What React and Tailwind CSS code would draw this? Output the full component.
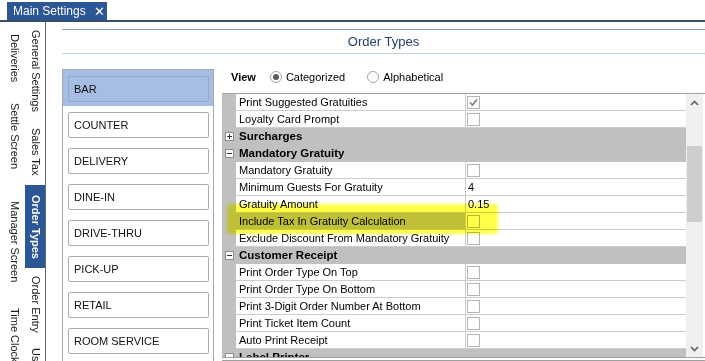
import React from "react";

const orderTypes = [
  "BAR",
  "COUNTER",
  "DELIVERY",
  "DINE-IN",
  "DRIVE-THRU",
  "PICK-UP",
  "RETAIL",
  "ROOM SERVICE",
];

// property grid rows
const rows = [
  { label: "Print Suggested Gratuities", check: true },
  { label: "Loyalty Card Prompt", check: false },
  { cat: "Surcharges", open: false },
  { cat: "Mandatory Gratuity", open: true },
  { label: "Mandatory Gratuity", check: false },
  { label: "Minimum Guests For Gratuity", value: "4" },
  { label: "Gratuity Amount", value: "0.15" },
  { label: "Include Tax In Gratuity Calculation", check: false, selected: true },
  { label: "Exclude Discount From Mandatory Gratuity", check: false },
  { cat: "Customer Receipt", open: true },
  { label: "Print Order Type On Top", check: false },
  { label: "Print Order Type On Bottom", check: false },
  { label: "Print 3-Digit Order Number At Bottom", check: false },
  { label: "Print Ticket Item Count", check: false },
  { label: "Auto Print Receipt", check: false },
  { cat: "Label Printer", open: true },
];

function SideTab({ label, h, active, top }) {
  return (
    <div
      className={`flex shrink-0 ${top ? "items-start" : "items-center"} justify-center ${
        active ? "bg-[#2b5797] text-white font-bold" : "text-[#1a1a1a]"
      }`}
      style={{ height: h, paddingTop: top || 0 }}
    >
      <span className="[writing-mode:vertical-rl] whitespace-nowrap leading-none">{label}</span>
    </div>
  );
}

function Checkbox({ checked }) {
  return (
    <div className="w-[13px] h-[13px] border border-[#b4b4b4] bg-white flex items-center justify-center">
      {checked && (
        <svg width="11" height="11" viewBox="0 0 11 11">
          <path d="M2 5.5 L4.5 8 L9 2.5" fill="none" stroke="#808080" strokeWidth="1.7" />
        </svg>
      )}
    </div>
  );
}

function Expander({ open }) {
  return (
    <div className="w-[9px] h-[9px] border border-[#8c8c8c] bg-white flex items-center justify-center">
      <svg width="7" height="7" viewBox="0 0 7 7">
        <path d="M1 3.5 H6" stroke="#333" strokeWidth="1" />
        {!open && <path d="M3.5 1 V6" stroke="#333" strokeWidth="1" />}
      </svg>
    </div>
  );
}

function Radio({ checked }) {
  return (
    <div className="w-[12px] h-[12px] rounded-full border border-[#a3a3a3] bg-white flex items-center justify-center">
      {checked && <div className="w-[6px] h-[6px] rounded-full bg-[#5a5a5a]" />}
    </div>
  );
}

function GridRow({ row }) {
  if (row.cat) {
    return (
      <div className="flex h-[17px] shrink-0 bg-[#c0c0c0] items-center">
        <div className="w-[14px] flex justify-center">
          <Expander open={row.open} />
        </div>
        <span className="pl-[3px] font-bold text-[11.5px]">{row.cat}</span>
      </div>
    );
  }
  return (
    <div className="flex h-[17px] shrink-0">
      <div className="w-[14px] bg-[#c0c0c0]" />
      <div
        className={`w-[229px] border-b border-[#cdcdcd] pl-[3px] flex items-center whitespace-nowrap overflow-hidden ${
          row.selected ? "bg-[#c0c0c0]" : "bg-white"
        }`}
      >
        {row.label}
      </div>
      <div className="flex-1 border-l border-b border-[#cdcdcd] pl-[1px] flex items-center bg-white">
        {row.value !== undefined ? <span className="pl-[1px]">{row.value}</span> : <Checkbox checked={row.check} />}
      </div>
    </div>
  );
}

export default function App() {
  return (
    <div className="w-[705px] h-[361px] overflow-hidden bg-white flex flex-col font-['Liberation_Sans',Arial,sans-serif] text-[11px] text-black">
      {/* document tab */}
      <div className="h-[22px] shrink-0 border-b-2 border-[#34506c] flex items-end pl-[7px]">
        <div className="w-[100px] h-[18px] bg-[#2b5797] text-white text-[12px] flex items-center pl-[6px] gap-[8px]">
          <span>Main Settings</span>
          <span className="text-[13px] leading-none">✕</span>
        </div>
      </div>

      <div className="flex flex-1 min-h-0">
        {/* vertical tabs */}
        <div className="w-[46px] shrink-0 border-r border-[#5f6e7d] flex overflow-hidden">
          <div className="w-[25px] flex flex-col pl-[4px]">
            <SideTab label="Deliveries" h={72} />
            <SideTab label="Settle Screen" h={85} />
            <SideTab label="Manager Screen" h={125} />
            <SideTab label="Time Clock" h={60} top={4} />
          </div>
          <div className="w-[20px] flex flex-col">
            <SideTab label="General Settings" h={97} />
            <SideTab label="Sales Tax" h={66} />
            <SideTab label="Order Types" h={83} active />
            <SideTab label="Order Entry" h={72} />
            <SideTab label="Users" h={40} top={8} />
          </div>
        </div>

        {/* content */}
        <div className="flex-1 flex flex-col pl-[16px] min-w-0">
          <div className="mt-[7px] h-[25px] shrink-0 border-t border-b border-t-[#8aa2ba] border-b-[#bcd0e4] flex items-center justify-center text-[13px] text-[#23406e]">
            Order Types
          </div>

          <div className="flex flex-1 min-h-0">
            {/* order type list */}
            <div className="mt-[15px] w-[152px] shrink-0 border border-b-0 border-[#a9a9a9] flex flex-col">
              {orderTypes.map((t, i) => (
                <div key={t} className={`h-[36px] shrink-0 pl-[5px] pr-[4px] pt-[6px] ${i === 0 ? "bg-[#a6bee3]" : ""}`}>
                  <div
                    className={`h-[26px] rounded-[2px] border flex items-center pl-[5px] text-[11px] text-[#111] ${
                      i === 0 ? "border-[#95a9c8]" : "border-[#acacac] bg-white"
                    }`}
                  >
                    {t}
                  </div>
                </div>
              ))}
            </div>

            {/* properties */}
            <div className="ml-[8px] flex-1 flex flex-col min-w-0">
              <div className="h-[39px] shrink-0 pt-[7px] flex items-center pl-[9px]">
                <span className="font-bold">View</span>
                <div className="ml-[14px] flex items-center gap-[4px]">
                  <Radio checked />
                  <span>Categorized</span>
                </div>
                <div className="ml-[22px] flex items-center gap-[4px]">
                  <Radio />
                  <span>Alphabetical</span>
                </div>
              </div>

              <div className="relative h-[265px] shrink-0 border-t border-b border-[#a0a0a0] flex">
                <div className="w-[464px] flex flex-col overflow-hidden">
                  {rows.map((r, i) => (
                    <GridRow key={i} row={r} />
                  ))}
                </div>
                <div className="w-[17px] bg-[#f0f0f0] flex flex-col">
                  <div className="h-[17px] flex items-center justify-center">
                    <svg width="9" height="6" viewBox="0 0 9 6">
                      <path d="M1 5 L4.5 1.5 L8 5" fill="none" stroke="#606060" strokeWidth="1.6" />
                    </svg>
                  </div>
                  <div className="flex-1 px-[1px]">
                    <div className="mt-[35px] h-[76px] bg-[#cdcdcd]" />
                  </div>
                  <div className="h-[17px] flex items-center justify-center">
                    <svg width="9" height="6" viewBox="0 0 9 6">
                      <path d="M1 1 L4.5 4.5 L8 1" fill="none" stroke="#606060" strokeWidth="1.6" />
                    </svg>
                  </div>
                </div>

                {/* marker highlight */}
                <div className="absolute left-[5px] top-[110px] w-[271px] h-[30px] rounded-[3px] bg-[#ffff4a] mix-blend-multiply blur-[1.5px]" />
              </div>

              <div className="mt-[2px] flex-1 border-t border-[#a0a0a0]" />
            </div>
          </div>
        </div>
      </div>
    </div>
  );
}
